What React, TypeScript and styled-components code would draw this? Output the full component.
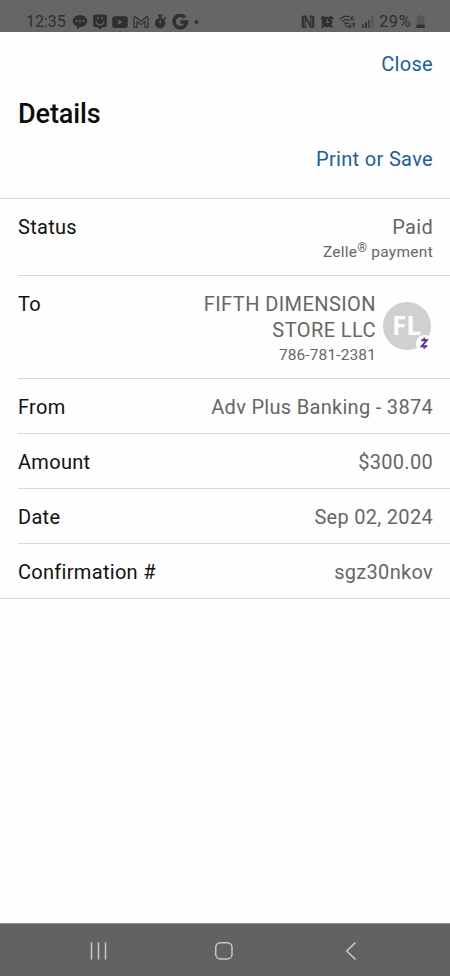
import React from "react";
import styled, { createGlobalStyle } from "styled-components";

const GlobalStyle = createGlobalStyle`
  * { box-sizing: border-box; }
  body { margin: 0; background: #fff; font-family: Roboto, "Liberation Sans", sans-serif; }
`;

const Screen = styled.div`
  width: 450px;
  height: 976px;
  display: flex;
  flex-direction: column;
  background: #fefefe;
  overflow: hidden;
`;

const StatusBar = styled.header`
  height: 32px;
  flex: none;
  display: flex;
  justify-content: space-between;
  padding: 10px 25px 0 26px;
  background: #666;
  color: #303030;
`;

const StatusGroup = styled.div`
  display: flex;
  align-items: center;
  gap: 5px;
  height: 23px;
  svg { display: block; }
`;

const Clock = styled.span`
  width: 41px;
  font: 400 16px/23px Roboto, sans-serif;
  white-space: nowrap;
`;

const Percent = styled.span`
  width: 34px;
  margin-right: -2px;
  font: 400 16.5px/23px Roboto, sans-serif;
  letter-spacing: 0.6px;
  white-space: nowrap;
`;

const Header = styled.section`
  flex: none;
  height: 166px;
  padding: 18px 17px 0 18px;
  display: flex;
  flex-direction: column;
`;

const LinkButton = styled.button`
  align-self: flex-end;
  border: 0;
  padding: 0;
  background: none;
  color: #195ca8;
  font: 400 20px/28px Roboto, sans-serif;
  letter-spacing: 0.33px;
`;

const Title = styled.h1`
  margin: 17px 0 12px;
  color: #0c0c0c;
  font: 500 27px/38px Roboto, sans-serif;
  letter-spacing: -0.1px;
`;

const List = styled.dl`
  margin: 0;
  flex: 1;
  border-top: 1px solid #d6d6d6;
`;

const Row = styled.div<{ $height: number; $last?: boolean }>`
  height: ${(p) => p.$height}px;
  margin-left: ${(p) => (p.$last ? 0 : 18)}px;
  padding: 14.5px 17px 0 ${(p) => (p.$last ? 18 : 0)}px;
  border-bottom: 1px solid #d6d6d6;
  display: flex;
  justify-content: space-between;
  font-size: 20px;
  line-height: 26px;
  letter-spacing: 0.3px;
`;

const Label = styled.dt`
  color: #111;
`;

const Value = styled.dd`
  margin: 0;
  color: #666;
  display: flex;
  text-align: right;
`;

const Payee = styled.div`
  letter-spacing: 0.42px;
`;

const Small = styled.div<{ $spacing: number }>`
  font-size: 15.5px;
  line-height: 24px;
  letter-spacing: ${(p) => p.$spacing}px;
  sup { font-size: 12.5px; line-height: 0; vertical-align: 5.5px; letter-spacing: 0; }
`;

const Avatar = styled.div`
  position: relative;
  width: 48px;
  height: 48px;
  margin: 11px 2.5px 0 6.5px;
  border-radius: 50%;
  background: #d0d0d0;
  color: #fff;
  text-align: center;
  font: 700 26px/47px "Open Sans", sans-serif;
  letter-spacing: 0;
`;

const Badge = styled.span`
  position: absolute;
  right: -2px;
  bottom: -2px;
  width: 17px;
  height: 17px;
  border-radius: 50%;
  background: #fff;
  svg { display: block; }
`;

const NavBar = styled.nav`
  flex: none;
  height: 53px;
  background: #626262;
  border-top: 1px solid #8c8c8c;
  display: flex;
  align-items: center;
  justify-content: space-between;
  padding: 2px 93px 0 89px;
  svg { display: block; }
`;

const HomeIcon = styled.svg`
  margin-left: -4px;
`;

const ink = "#303030";
const hole = "#666";

const ChatIcon = () => (
  <svg width="16" height="16" viewBox="0 0 16 16">
    <path d="M8 1.2c4.4 0 7.4 2.5 7.4 5.8s-3 5.9-7.1 5.9L5 15.3l.1-3C2.3 11.6.6 9.6.6 7 .6 3.7 3.6 1.2 8 1.2z" fill={ink} />
    <circle cx="4.7" cy="7" r="1" fill={hole} /><circle cx="8" cy="7" r="1" fill={hole} /><circle cx="11.3" cy="7" r="1" fill={hole} />
  </svg>
);
const FaceIcon = () => (
  <svg width="14" height="16" viewBox="0 0 14 16">
    <path d="M2.5.5h9a2.300 2.300 0 012.300 2.300V11a2.300 2.300 0 01-2.300 2.300H9.300L7 15.700l-2.300-2.400H2.500A2.300 2.300 0 01.2 11V2.800A2.300 2.300 0 012.500.5z" fill={ink} />
    <path d="M3 7.300a4 3.600 0 008 0" fill="none" stroke={hole} strokeWidth="1.300" />
    <path d="M4.800 3v2.300M9.200 3v2.300" stroke={hole} strokeWidth="1.300" />
  </svg>
);
const PlayIcon = () => (
  <svg width="16" height="16" viewBox="0 0 16 16">
    <rect x=".2" y="2.3" width="15.6" height="11.6" rx="2.6" fill={ink} />
    <path d="M6.400 5.700v4.800l4.100-2.400z" fill={hole} />
  </svg>
);
const MailIcon = () => (
  <svg width="16" height="16" viewBox="0 0 16 16">
    <path d="M1 13.200V3.700q0-1.200 1.200-1L8 7.300l5.800-4.600q1.200-.2 1.200 1v9.500h-3V7.400l-4 3.200-4-3.200v5.800z" fill="none" stroke={ink} strokeWidth="1.2" strokeLinejoin="round" />
  </svg>
);
const TimerIcon = () => (
  <svg width="13" height="16" viewBox="0 0 13 16">
    <circle cx="6.2" cy="9.1" r="5.3" fill={ink} />
    <path d="M4 1.500h4.400M6.200 1.500V4M10.300 3.500l1.500 1.500" stroke={ink} strokeWidth="1.9" />
    <path d="M6.200 6v3.600" stroke={hole} strokeWidth="1.3" />
  </svg>
);
const GIcon = () => (
  <svg width="17" height="16" viewBox="0 0 17 16">
    <path d="M13 3.500A6.200 6.200 0 1014.400 8.100H8.500" fill="none" stroke={ink} strokeWidth="3.5" />
  </svg>
);
const DotIcon = () => (
  <svg width="5" height="16" viewBox="0 0 5 16"><circle cx="2.5" cy="8" r="2" fill={ink} /></svg>
);
const NfcIcon = () => (
  <svg width="14" height="16" viewBox="0 0 14 16">
    <path d="M.6 3.500Q.6 1.500 2.600 1.500H5L9.200 10V3.500L7.800 1.500h3.500q2 0 2 2v8.600q0 2-2 2H9.200L4.800 5.600V12l1.400 2.100H2.600q-2 0-2-2z" fill={ink} />
    <path d="M3.300 3.200v9.400M10.700 3.200v9.400" stroke={hole} strokeWidth=".7" />
  </svg>
);
const AlarmIcon = () => (
  <svg width="14" height="16" viewBox="0 0 14 16">
    <path d="M1.200 5l3-3M12.800 5l-3-3M3.200 11.500L1.900 13.700M10.800 11.500l1.300 2.200" stroke={ink} strokeWidth="2.3" />
    <circle cx="7" cy="8" r="5.3" fill={ink} />
    <path d="M7 5v3.400h2.500" fill="none" stroke={hole} strokeWidth="1.2" />
  </svg>
);
const WifiIcon = () => (
  <svg width="18" height="16" viewBox="0 0 18 16">
    <path d="M1 5.200Q6 .5 11 3M3 7.800Q6.600 4.400 10.500 6.300M5.200 10.200Q7.400 8.200 9.600 9.500" fill="none" stroke={ink} strokeWidth="1.3" />
    <circle cx="7.5" cy="12.3" r="1.1" fill={ink} />
    <path d="M14.400 2q-2.300.2-2.300 3a1.400 1.400 0 102.800 0q-.3-1.600-2.600-.8" fill="none" stroke={ink} strokeWidth="1" />
    <path d="M11 9v4.500M9.500 12l1.500 1.700 1.500-1.700M14.700 13.500V9M13.200 10.700L14.700 9l1.500 1.700" fill="none" stroke={ink} strokeWidth="1.100" />
  </svg>
);
const SignalIcon = () => (
  <svg width="12" height="16" viewBox="0 0 12 16">
    <path d="M1 14v-3.500M4 14V8.500" stroke={ink} strokeWidth="1.8" />
    <path d="M7 14V6" stroke={ink} strokeWidth="1.5" opacity=".8" />
    <path d="M10.500 14V2" stroke={ink} strokeWidth="2" opacity=".3" />
  </svg>
);
const BatteryIcon = () => (
  <svg width="9" height="16" viewBox="0 0 9 16">
    <path d="M3 1h3v1.300h2.300V11H.7V2.300H3z" fill={ink} opacity=".27" />
    <path d="M.4 10.700h8.200V14H.4z" fill={ink} />
  </svg>
);
const ZelleMark = () => (
  <svg width="17" height="17" viewBox="0 0 17 17">
    <path d="M5.200 5.300h5.600L5.700 11.200h5.600M8.300 2.800v2.500M8.300 11.200v2.600" fill="none" stroke="#6325ad" strokeWidth="1.9" />
  </svg>
);

const details = [
  { label: "From", value: "Adv Plus Banking - 3874" },
  { label: "Amount", value: "$300.00" },
  { label: "Date", value: "Sep 02, 2024" },
  { label: "Confirmation #", value: "sgz30nkov", last: true },
];

export default function App() {
  return (
    <Screen>
      <GlobalStyle />
      <StatusBar>
        <StatusGroup>
          <Clock>12:35</Clock>
          <ChatIcon /><FaceIcon /><PlayIcon /><MailIcon /><TimerIcon /><GIcon /><DotIcon />
        </StatusGroup>
        <StatusGroup>
          <NfcIcon /><AlarmIcon /><WifiIcon /><SignalIcon />
          <Percent>29%</Percent>
          <BatteryIcon />
        </StatusGroup>
      </StatusBar>
      <Header>
        <LinkButton>Close</LinkButton>
        <Title>Details</Title>
        <LinkButton>Print or Save</LinkButton>
      </Header>
      <List>
        <Row $height={77}>
          <Label>Status</Label>
          <Value>
            <div>
              Paid
              <Small $spacing={0.27}>Zelle<sup>®</sup> payment</Small>
            </div>
          </Value>
        </Row>
        <Row $height={103}>
          <Label>To</Label>
          <Value>
            <Payee>
              FIFTH DIMENSION<br />STORE LLC
              <Small $spacing={0.12}>786-781-2381</Small>
            </Payee>
            <Avatar>
              FL
              <Badge><ZelleMark /></Badge>
            </Avatar>
          </Value>
        </Row>
        {details.map((d) => (
          <Row key={d.label} $height={55} $last={d.last}>
            <Label>{d.label}</Label>
            <Value>{d.value}</Value>
          </Row>
        ))}
      </List>
      <NavBar>
        <svg width="18" height="20" viewBox="0 0 18 20"><path d="M2.500 1.500v17M9.500 1.500v17M16.500 1.500v17" stroke="#c8c8c8" strokeWidth="1.5" /></svg>
        <HomeIcon width="20" height="20" viewBox="0 0 20 20"><rect x="1.7" y="1.7" width="16.3" height="16.3" rx="4.8" fill="none" stroke="#c8c8c8" strokeWidth="1.5" /></HomeIcon>
        <svg width="12" height="20" viewBox="0 0 12 20"><path d="M10.500 1.500L1.800 10l8.700 8.500" fill="none" stroke="#c8c8c8" strokeWidth="1.6" /></svg>
      </NavBar>
    </Screen>
  );
}
